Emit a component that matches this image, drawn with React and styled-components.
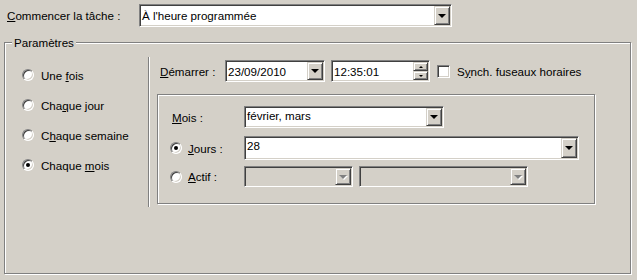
import React from "react";
import styled, { createGlobalStyle, css } from "styled-components";

const GlobalStyle = createGlobalStyle`
  html, body {
    margin: 0;
    padding: 0;
    background: #d4d0c8;
  }
  body {
    font-family: "Liberation Sans", Arial, sans-serif;
    font-size: 11.6px;
    color: #000;
  }
  u { text-decoration: underline; text-underline-offset: 1px; }
`;

const Page = styled.div`
  width: 637px;
  height: 280px;
  box-sizing: border-box;
  padding: 4px 0 0 4px;
  overflow: hidden;
`;

const TopRow = styled.div`
  display: flex;
  align-items: center;
  padding-left: 3px;
`;

const Label = styled.span`
  display: inline-block;
  width: ${(p) => p.w || "auto"};
  flex-shrink: 0;
  white-space: nowrap;
`;

// sunken 3d field (classic windows look)
const Field = styled.div`
  position: relative;
  box-sizing: border-box;
  width: ${(p) => p.w}px;
  height: ${(p) => p.h || 22}px;
  flex-shrink: 0;
  background: ${(p) => (p.disabled ? "#d4d0c8" : "#fff")};
  border: 1px solid;
  border-color: #808080 #fff #fff #808080;
  box-shadow: inset 1px 1px 0 #404040, inset -1px -1px 0 #d4d0c8;
  padding: ${(p) => (p.top ? "2px 20px 0 2px" : "1px 20px 0 2px")};
  display: flex;
  align-items: ${(p) => (p.top ? "flex-start" : "center")};
  line-height: 14px;
  white-space: nowrap;
  overflow: hidden;
`;

const DropBtn = styled.span`
  position: absolute;
  top: 1px;
  right: 1px;
  bottom: 1px;
  width: 16px;
  box-sizing: border-box;
  background: #d4d0c8;
  border: 1px solid;
  border-color: #d4d0c8 #404040 #404040 #d4d0c8;
  box-shadow: inset 1px 1px 0 #fff, inset -1px -1px 0 #808080;
  display: flex;
  align-items: center;
  justify-content: center;
  &::after {
    content: "";
    width: 0;
    height: 0;
    border-left: 4px solid transparent;
    border-right: 4px solid transparent;
    border-top: 4px solid ${(p) => (p.disabled ? "#808080" : "#000")};
    ${(p) =>
      p.disabled &&
      css`
        filter: drop-shadow(1px 1px 0 #fff);
      `}
  }
`;

const SpinBox = styled.span`
  position: absolute;
  top: 1px;
  right: 1px;
  bottom: 1px;
  width: 15px;
  display: flex;
  flex-direction: column;
`;

const SpinBtn = styled.span`
  flex: 1;
  box-sizing: border-box;
  background: #d4d0c8;
  border: 1px solid;
  border-color: #d4d0c8 #404040 #404040 #d4d0c8;
  box-shadow: inset 1px 1px 0 #fff, inset -1px -1px 0 #808080;
  display: flex;
  align-items: center;
  justify-content: center;
  &::after {
    content: "";
    width: 0;
    height: 0;
    border-left: 2px solid transparent;
    border-right: 2px solid transparent;
    ${(p) =>
      p.up
        ? css`border-bottom: 2px solid #000;`
        : css`border-top: 2px solid #000;`}
  }
`;

const CheckBox = styled.span`
  width: 13px;
  height: 13px;
  box-sizing: border-box;
  flex-shrink: 0;
  background: #fff;
  border: 1px solid;
  border-color: #808080 #fff #fff #808080;
  box-shadow: inset 1px 1px 0 #404040, inset -1px -1px 0 #d4d0c8;
`;

const RadioDot = styled.span`
  position: relative;
  width: 12px;
  height: 12px;
  flex-shrink: 0;
  box-sizing: border-box;
  border-radius: 50%;
  background: #fff;
  border: 1px solid;
  border-color: #808080 #fff #fff #808080;
  box-shadow: inset 1px 1px 0 #404040, inset -1px -1px 0 #d4d0c8;
  ${(p) =>
    p.checked &&
    css`
      &::after {
        content: "";
        position: absolute;
        left: 3px;
        top: 3px;
        width: 4px;
        height: 4px;
        border-radius: 50%;
        background: #000;
      }
    `}
`;

const Group = styled.fieldset`
  margin: 9px 0 0 0;
  width: 627px;
  height: 238px;
  box-sizing: border-box;
  padding: 0;
  border: 1px solid #808080;
  box-shadow: inset 1px 1px 0 #fff, 1px 1px 0 #fff;
  display: flex;
  align-items: flex-start;
`;

const Legend = styled.legend`
  margin-left: 7px;
  padding: 0 2px;
  line-height: 13px;
  background: #d4d0c8;
`;

const LeftCol = styled.div`
  width: 143px;
  padding: 11px 0 0 17px;
  box-sizing: border-box;
  display: flex;
  flex-direction: column;
`;

const RadioRow = styled.div`
  display: flex;
  align-items: center;
  gap: 7px;
  height: 30px;
`;

const Separator = styled.div`
  width: 2px;
  height: 150px;
  margin-top: 8px;
  background: linear-gradient(to right, #808080 50%, #fff 50%);
`;

const RightCol = styled.div`
  display: flex;
  flex-direction: column;
  padding-top: 11px;
`;

const StartRow = styled.div`
  display: flex;
  align-items: center;
  padding-left: 10px;
`;

const Inner = styled.div`
  margin: 12px 0 0 7px;
  width: 438px;
  height: 110px;
  box-sizing: border-box;
  border: 1px solid #808080;
  box-shadow: inset 1px 1px 0 #fff, 1px 1px 0 #fff;
  padding: 11px 0 0 12px;
  display: flex;
  flex-direction: column;
`;

const FormRow = styled.div`
  display: flex;
  align-items: center;
  margin-bottom: ${(p) => p.mb || 0}px;
`;

const LabelCell = styled.div`
  width: 74px;
  display: flex;
  align-items: center;
  gap: 6px;
  padding-left: ${(p) => p.pl || 0}px;
  box-sizing: border-box;
`;

const Gap = styled.span`
  display: inline-block;
  width: ${(p) => p.w}px;
  flex-shrink: 0;
`;

export default function App() {
  return (
    <Page>
      <GlobalStyle />
      <TopRow>
        <Label w="132px">
          <u>C</u>ommencer la tâche :
        </Label>
        <Field w={313} h={23}>
          À l'heure programmée
          <DropBtn />
        </Field>
      </TopRow>

      <Group>
        <Legend>Paramètres</Legend>
        <LeftCol>
          <RadioRow>
            <RadioDot />
            <span>
              Une <u>f</u>ois
            </span>
          </RadioRow>
          <RadioRow>
            <RadioDot />
            <span>
              Cha<u>q</u>ue jour
            </span>
          </RadioRow>
          <RadioRow>
            <RadioDot />
            <span>
              C<u>h</u>aque semaine
            </span>
          </RadioRow>
          <RadioRow>
            <RadioDot checked />
            <span>
              Chaque <u>m</u>ois
            </span>
          </RadioRow>
        </LeftCol>

        <Separator />

        <RightCol>
          <StartRow>
            <Label w="65px">
              <u>D</u>émarrer :
            </Label>
            <Field w={100}>
              23/09/2010
              <DropBtn />
            </Field>
            <Gap w={6} />
            <Field w={99}>
              12:35:01
              <SpinBox>
                <SpinBtn up />
                <SpinBtn />
              </SpinBox>
            </Field>
            <Gap w={7} />
            <CheckBox />
            <Gap w={7} />
            <span>
              S<u>y</u>nch. fuseaux horaires
            </span>
          </StartRow>

          <Inner>
            <FormRow mb={8}>
              <LabelCell pl={2}>
                <span>
                  <u>M</u>ois :
                </span>
              </LabelCell>
              <Field w={200} top>
                février, mars
                <DropBtn />
              </Field>
            </FormRow>
            <FormRow mb={6}>
              <LabelCell>
                <RadioDot checked />
                <span>
                  <u>J</u>ours :
                </span>
              </LabelCell>
              <Field w={335} h={24} top>
                28
                <DropBtn />
              </Field>
            </FormRow>
            <FormRow>
              <LabelCell>
                <RadioDot />
                <span>
                  <u>A</u>ctif :
                </span>
              </LabelCell>
              <Field w={109} h={21} disabled>
                <DropBtn disabled />
              </Field>
              <Gap w={6} />
              <Field w={169} h={21} disabled>
                <DropBtn disabled />
              </Field>
            </FormRow>
          </Inner>
        </RightCol>
      </Group>
    </Page>
  );
}
